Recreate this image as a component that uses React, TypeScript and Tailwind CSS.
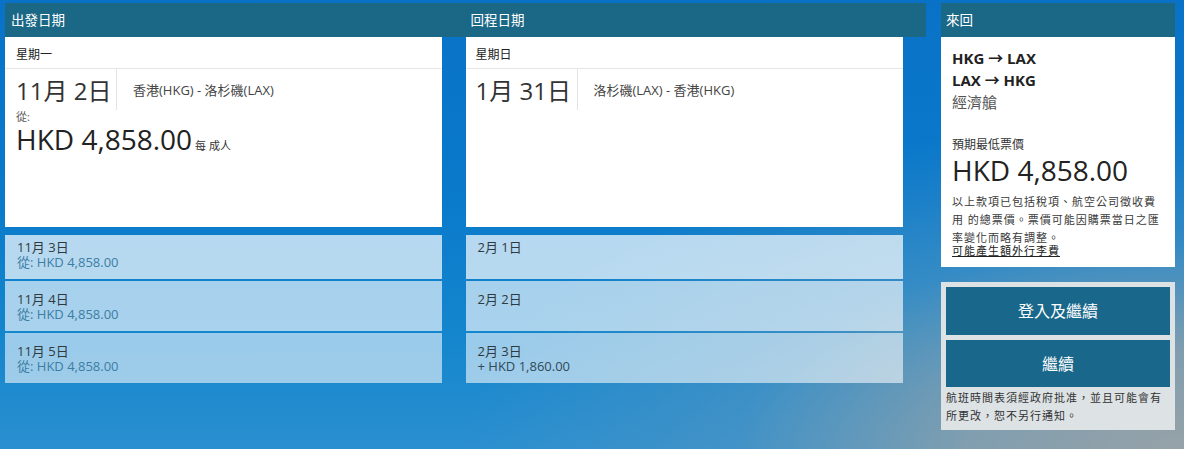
import React from "react";

const font = "font-['Open_Sans','Noto_Sans_CJK_TC',sans-serif]";

function SmallRow({
  date,
  price,
  priceClass,
  bg,
  h,
  pt,
}: {
  date: string;
  price?: string;
  priceClass?: string;
  bg: string;
  h: string;
  pt: string;
}) {
  return (
    <div className={`${bg} ${h} ${pt} w-[437px] pl-[12px] text-[13px] leading-[15px]`}>
      <div className="text-[#2f3a40]">{date}</div>
      {price ? <div className={priceClass}>{price}</div> : null}
    </div>
  );
}

export default function App() {
  return (
    <div
      className={`${font} h-[449px] w-full overflow-hidden bg-[image:radial-gradient(ellipse_720px_330px_at_100%_100%,rgba(150,162,168,1)_0%,rgba(138,160,172,0.9)_30%,rgba(90,150,190,0.5)_62%,rgba(30,130,200,0)_100%),linear-gradient(180deg,#0972c7_0%,#0a7acb_45%,#1486cd_75%,#2a8fd0_100%)] pt-[3px] pl-[5px]`}
    >
      <div className="flex items-start gap-[15px]">
        {/* Main area */}
        <div className="w-[921px]">
          <div className="grid h-[34px] grid-cols-2 bg-[#1a6886] text-[13.5px] text-white">
            <div className="pl-[6px] pt-[7px]">出發日期</div>
            <div className="pl-[5px] pt-[7px]">回程日期</div>
          </div>
          <div className="grid grid-cols-2">
            {/* Outbound */}
            <div className="flex flex-col">
              <div className="h-[190px] w-[437px] bg-white">
                <div className="h-[32px] border-b border-[#e6e6e6] pl-[11px] pt-[9px] text-[12px] leading-[18px] text-[#222]">
                  星期一
                </div>
                <div className="flex">
                  <div className="h-[41px] w-[112px] border-r border-[#e3e3e3] pl-[11px] pt-[6px] text-[24px] leading-[32px] text-[#333]">
                    11月 2日
                  </div>
                  <div className="pl-[16px] pt-[12px] text-[13px] leading-[18px] text-[#444]">
                    香港(HKG) - 洛杉磯(LAX)
                  </div>
                </div>
                <div className="pl-[11px]">
                  <div className="text-[11px] leading-[14px] text-[#555]">從:</div>
                  <div className="flex items-baseline text-[#222]">
                    <span className="text-[28px] leading-[30px]">HKD 4,858.00</span>
                    <span className="ml-[3px] text-[11px] text-[#333]">每 成人</span>
                  </div>
                </div>
              </div>
              <div className="mt-[8px] flex flex-col gap-[2px]">
                <SmallRow
                  date="11月 3日"
                  price="從: HKD 4,858.00"
                  priceClass="text-[#3c7ea3]"
                  bg="bg-white/70"
                  h="h-[44px]"
                  pt="pt-[5px]"
                />
                <SmallRow
                  date="11月 4日"
                  price="從: HKD 4,858.00"
                  priceClass="text-[#3c7ea3]"
                  bg="bg-white/[0.63]"
                  h="h-[50px]"
                  pt="pt-[11px]"
                />
                <SmallRow
                  date="11月 5日"
                  price="從: HKD 4,858.00"
                  priceClass="text-[#3c7ea3]"
                  bg="bg-white/[0.57]"
                  h="h-[50px]"
                  pt="pt-[11px]"
                />
              </div>
            </div>
            {/* Return */}
            <div className="flex flex-col">
              <div className="h-[190px] w-[437px] bg-white">
                <div className="h-[32px] border-b border-[#e6e6e6] pl-[10px] pt-[9px] text-[12px] leading-[18px] text-[#222]">
                  星期日
                </div>
                <div className="flex">
                  <div className="h-[41px] w-[112px] border-r border-[#e3e3e3] pl-[10px] pt-[6px] text-[24px] leading-[32px] text-[#333]">
                    1月 31日
                  </div>
                  <div className="pl-[16px] pt-[12px] text-[13px] leading-[18px] text-[#444]">
                    洛杉磯(LAX) - 香港(HKG)
                  </div>
                </div>
              </div>
              <div className="mt-[8px] flex flex-col gap-[2px]">
                <SmallRow date="2月 1日" bg="bg-white/70" h="h-[44px]" pt="pt-[5px]" />
                <SmallRow date="2月 2日" bg="bg-white/[0.63]" h="h-[50px]" pt="pt-[11px]" />
                <SmallRow
                  date="2月 3日"
                  price="+ HKD 1,860.00"
                  priceClass="text-[#2f4a5a]"
                  bg="bg-white/[0.57]"
                  h="h-[50px]"
                  pt="pt-[11px]"
                />
              </div>
            </div>
          </div>
        </div>

        {/* Sidebar */}
        <div className="w-[234px]">
          <div className="h-[34px] bg-[#1a6886] pl-[5px] pt-[7px] text-[13.5px] text-white">來回</div>
          <div className="h-[230px] bg-white px-[11px] pt-[10px]">
            <div className="text-[15px] font-bold leading-[22px] text-[#222]">HKG → LAX</div>
            <div className="text-[15px] font-bold leading-[22px] text-[#222]">LAX → HKG</div>
            <div className="text-[15px] leading-[22px] text-[#555]">經濟艙</div>
            <div className="mt-[24px] text-[12px] leading-[16px] text-[#333]">預期最低票價</div>
            <div className="text-[28px] leading-[34px] text-[#222]">HKD 4,858.00</div>
            <div className="mt-[6px] text-[11px] leading-[18px] tracking-[1px] text-[#3a3a3a]">
              以上款項已包括稅項、航空公司徵收費
              <br />
              用 的總票價。票價可能因購票當日之匯
              <br />
              率變化而略有調整。
            </div>
            <div className="-mt-[3px] text-[11px] leading-[14px] tracking-[1px] text-[#222] underline">
              可能產生額外行李費
            </div>
          </div>
          <div className="mt-[15px] bg-[#dde2e5] px-[5px] pb-[5px] pt-[5px]">
            <div className="flex h-[48px] items-center justify-center bg-[#19678a] text-[16px] text-white">
              登入及繼續
            </div>
            <div className="mt-[5px] flex h-[47px] items-center justify-center bg-[#19678a] text-[16px] text-white">
              繼續
            </div>
            <div className="mt-[2px] text-[11px] leading-[18px] tracking-[1px] text-[#333]">
              航班時間表須經政府批准，並且可能會有所更改，恕不另行通知。
            </div>
          </div>
        </div>
      </div>
    </div>
  );
}
